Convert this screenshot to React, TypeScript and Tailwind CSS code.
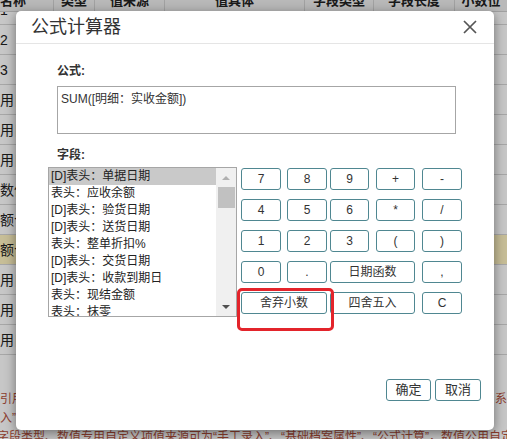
import React from "react";

const rows: { t: string; y?: boolean }[] = [
  { t: "1" },
  { t: "2" },
  { t: "3" },
  { t: "用自定义项" },
  { t: "用自定义项" },
  { t: "用自定义项" },
  { t: "数值" },
  { t: "额合计" },
  { t: "额合计", y: true },
  { t: "用自定义项" },
  { t: "用自定义项" },
  { t: "用自定义项" },
];

const heads = ["名称", "类型", "值来源", "值具体", "字段类型", "字段长度", "小数位"];

const items = [
  "[D]表头：单据日期",
  "表头：应收余额",
  "[D]表头：验货日期",
  "[D]表头：送货日期",
  "表头：整单折扣%",
  "[D]表头：交货日期",
  "[D]表头：收款到期日",
  "表头：现结金额",
  "表头：抹零",
];

const keys: { k: string; span?: boolean; w: string }[] = [
  { k: "7", w: "w-[40px]" },
  { k: "8", w: "w-[40px]" },
  { k: "9", w: "w-[39px]" },
  { k: "+", w: "w-[39px]" },
  { k: "-", w: "w-[40px]" },
  { k: "4", w: "w-[40px]" },
  { k: "5", w: "w-[40px]" },
  { k: "6", w: "w-[39px]" },
  { k: "*", w: "w-[39px]" },
  { k: "/", w: "w-[40px]" },
  { k: "1", w: "w-[40px]" },
  { k: "2", w: "w-[40px]" },
  { k: "3", w: "w-[39px]" },
  { k: "(", w: "w-[39px]" },
  { k: ")", w: "w-[40px]" },
  { k: "0", w: "w-[40px]" },
  { k: ".", w: "w-[40px]" },
  { k: "日期函数", span: true, w: "w-[85px]" },
  { k: ",", w: "w-[40px]" },
  { k: "舍弃小数", span: true, w: "w-[86px]" },
  { k: "四舍五入", span: true, w: "w-[85px]" },
  { k: "C", w: "w-[40px]" },
];

export default function App() {
  return (
    <div className="relative w-[507px] h-[439px] overflow-hidden bg-white font-['Liberation_Sans','Noto_Sans_CJK_SC',sans-serif]">
      {/* background page */}
      <div className="flex flex-col">
        <div className="-mt-[5px] flex flex-col">
          {rows.map((r, i) => (
            <div
              key={i}
              className={`grid grid-cols-[54px_41px_70px_140px_69px_81px_1fr] h-[30px] border-b border-[#d6d6d6] ${
                r.y ? "bg-[#fff4c2]" : ""
              }`}
            >
              <div className="border-r border-[#d6d6d6] flex items-center text-[14px] leading-[16px] text-[#222] whitespace-nowrap overflow-hidden">
                {r.t}
              </div>
              <div className="border-r border-[#d6d6d6]" />
              <div className="border-r border-[#d6d6d6]" />
              <div className="border-r border-[#d6d6d6]" />
              <div className="border-r border-[#d6d6d6]" />
              <div className="border-r border-[#d6d6d6]" />
              <div />
            </div>
          ))}
        </div>
        <div className="pt-[35px] text-[12px] leading-[19px] text-[#b4503c] whitespace-nowrap">
          <div className="flex justify-between">
            <span>引用自定义项的取值</span>
            <span className="-mr-[12px]">系统</span>
          </div>
          <div>入”、“</div>
          <div className="-ml-[3px]">
            字段类型、数值专用自定义项值来源可为“手工录入”、“基础档案属性”、“公式计算”，数值公用自定义项
          </div>
        </div>
      </div>

      {/* sticky table header */}
      <div className="absolute left-0 right-0 top-[-12px] h-[24px] grid grid-cols-[54px_41px_70px_140px_69px_81px_1fr] bg-[#ededed] border-b border-[#cfcfcf] text-[13px] font-bold leading-[16px] text-[#222] whitespace-nowrap">
        {heads.map((h, i) => (
          <div
            key={i}
            className={`flex items-center pt-[2px] overflow-hidden ${
              i === 0 ? "justify-start" : "justify-center"
            } ${i < 6 ? "border-r border-[#d0d0d0]" : ""}`}
          >
            {h}
          </div>
        ))}
      </div>

      {/* backdrop */}
      <div className="absolute inset-0 bg-black/[0.22]" />

      {/* modal */}
      <div className="absolute left-[16px] top-[11px] w-[478px] h-[419px] bg-white rounded-[5px] shadow-[0_3px_12px_rgba(0,0,0,0.45)] flex flex-col">
        <div className="h-[33px] shrink-0 border-b border-[#e5e5e5] flex items-center justify-between pl-[15px] pr-[17px]">
          <span className="text-[18px] leading-[22px] text-[#333]">公式计算器</span>
          <svg width="14" height="14" viewBox="0 0 14 14">
            <path d="M1 1L13 13M13 1L1 13" stroke="#555" strokeWidth="1.7" />
          </svg>
        </div>

        <div className="relative flex-1 flex flex-col">
          <div className="pl-[41px] pt-[19px] text-[12px] font-bold leading-[16px] text-[#333]">公式:</div>
          <div className="ml-[41px] mt-[7px] w-[399px] h-[48px] border border-[#a6a6a6] px-[3px] pt-[4px] text-[12px] leading-[16px] text-[#333]">
            SUM([明细：实收金额])
          </div>
          <div className="pl-[41px] mt-[13px] text-[12px] font-bold leading-[16px] text-[#333]">字段:</div>

          <div className="flex items-start pl-[32px] mt-[4px]">
            {/* list box */}
            <div className="w-[189px] h-[150px] border border-[#a6a6a6] flex overflow-hidden">
              <div className="flex-1 flex flex-col overflow-hidden">
                {items.map((it, i) => (
                  <div
                    key={i}
                    className={`h-[17px] shrink-0 pl-[2px] text-[12px] leading-[17px] text-[#222] whitespace-nowrap ${
                      i === 0 ? "bg-[#c9c9c9]" : ""
                    }`}
                  >
                    {it}
                  </div>
                ))}
              </div>
              <div className="w-[20px] shrink-0 bg-[#f0f0f0] flex flex-col items-center">
                <div className="h-[18px] flex items-center justify-center">
                  <svg width="8" height="5" viewBox="0 0 8 5">
                    <path d="M0 5L4 1L8 5Z" fill="#b0b0b0" />
                  </svg>
                </div>
                <div className="w-[17px] h-[21px] mt-[1px] bg-[#c1c1c1]" />
                <div className="flex-1" />
                <div className="h-[18px] flex items-center justify-center">
                  <svg width="8" height="5" viewBox="0 0 8 5">
                    <path d="M0 0L4 4L8 0Z" fill="#505050" />
                  </svg>
                </div>
              </div>
            </div>

            {/* calculator keys */}
            <div className="ml-[4px] mt-[1px] grid grid-cols-[46px_43px_46px_46px_40px] gap-y-[9px]">
              {keys.map((b, i) => (
                <div key={i} className={b.span ? "col-span-2" : ""}>
                  <button
                    className={`${b.w} h-[22px] border border-[#4f8791] rounded-[3px] bg-white text-[12px] leading-[16px] text-[#333] flex items-center justify-center`}
                  >
                    {b.k}
                  </button>
                </div>
              ))}
            </div>
          </div>

          {/* footer */}
          <div className="mt-auto flex justify-end gap-[4px] pr-[13px] pb-[29px]">
            <button className="w-[45px] h-[22px] border border-[#4f8791] rounded-[3px] bg-white text-[13px] leading-[16px] text-[#333]">
              确定
            </button>
            <button className="w-[46px] h-[22px] border border-[#4f8791] rounded-[3px] bg-white text-[13px] leading-[16px] text-[#333]">
              取消
            </button>
          </div>

          {/* red annotation */}
          <div className="absolute left-[221px] top-[244px] w-[97px] h-[43px] border-[3px] border-[#e3242b] rounded-[5px]" />
        </div>
      </div>
    </div>
  );
}
